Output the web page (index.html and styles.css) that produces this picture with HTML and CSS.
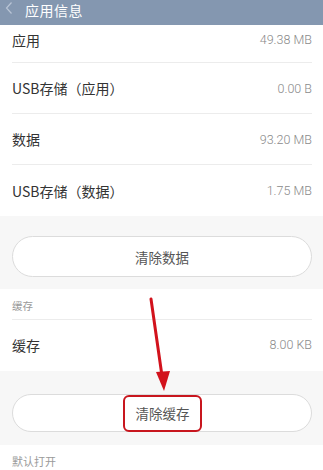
FILE: index.html
```html
<!DOCTYPE html>
<html lang="zh">
<head>
<meta charset="utf-8">
<link rel="stylesheet" href="styles.css">
</head>
<body>
<div class="page">
  <header class="topbar">
    <svg class="back" width="8" height="12" viewBox="0 0 8 12"><path d="M6.5 0.5 L1.5 6 L6.5 11.5" fill="none" stroke="#b9c5d6" stroke-width="1.2"/></svg>
    <span class="title">应用信息</span>
  </header>
  <section class="group">
    <div class="row first"><span class="label">应用</span><span class="value">49.38 MB</span></div>
    <div class="row"><span class="label">USB存储（应用）</span><span class="value">0.00 B</span></div>
    <div class="row"><span class="label">数据</span><span class="value">93.20 MB</span></div>
    <div class="row last"><span class="label">USB存储（数据）</span><span class="value">1.75 MB</span></div>
  </section>
  <section class="btnarea a">
    <div class="pill tall">清除数据</div>
  </section>
  <section class="group">
    <div class="subhead">缓存</div>
    <div class="row last cache"><span class="label">缓存</span><span class="value">8.00 KB</span></div>
  </section>
  <section class="btnarea b">
    <div class="pill"><span class="mark">清除缓存</span></div>
  </section>
  <section class="group">
    <div class="subhead tail">默认打开</div>
  </section>
  <svg class="arrow" width="323" height="470" viewBox="0 0 323 470">
    <line x1="151" y1="299" x2="162" y2="376" stroke="#d2121c" stroke-width="3" stroke-linecap="round"/>
    <polygon points="156,372 170,371 164,391" fill="#d2121c"/>
  </svg>
</div>
</body>
</html>
```
FILE: styles.css
```css
* { box-sizing: border-box; }
html, body { margin: 0; padding: 0; background: #fff; }
body {
  width: 323px;
  height: 470px;
  overflow: hidden;
  font-family: "Noto Sans CJK SC", "Noto Sans", sans-serif;
  color: #333;
}
.page { position: relative; width: 323px; height: 470px; }
.topbar {
  height: 25px;
  background: #8497b0;
  display: flex;
  align-items: flex-start;
  padding-left: 5px;
  gap: 12px;
}
.back { margin-top: 2px; }
.title {
  color: #fff;
  font-size: 14px;
  line-height: 21px;
  margin-top: 0;
  letter-spacing: 0.5px;
}
.group { background: #fff; padding: 0 11px 0 12px; }
.row {
  display: flex;
  justify-content: space-between;
  align-items: center;
  height: 51px;
  border-bottom: 1px solid #ececec;
}
.row.first { height: 38px; padding-bottom: 8px; }
.row.last { border-bottom: none; }
.row.cache { height: 51px; padding-bottom: 2px; }
.label { font-size: 14px; color: #333; }
.value {
  font-family: Roboto, "Liberation Sans", sans-serif;
  font-weight: 300;
  font-size: 12.5px;
  color: #8a8a8a;
}
.btnarea { background: #f7f7f7; padding: 0 11px 0 12px; }
.btnarea.a { height: 73px; padding-top: 20px; }
.btnarea.b { height: 74px; padding-top: 23px; }
.pill {
  height: 38px;
  border: 1px solid #dcdcdc;
  border-radius: 21px;
  background: #fff;
  display: flex;
  align-items: center;
  justify-content: center;
  font-size: 13.5px;
  color: #555;
}
.pill.tall { height: 41px; }
.mark {
  border: 2.5px solid #c8161e;
  border-radius: 6px;
  height: 37px;
  width: 79px;
  display: flex;
  align-items: center;
  justify-content: center;
  margin-left: 1px;
}
.subhead {
  font-size: 10.5px;
  color: #9a9a9a;
  height: 31px;
  display: flex;
  align-items: center;
  padding-top: 2px;
  border-bottom: 1px solid #ececec;
}
.subhead.tail { border-bottom: none; height: 28px; padding-top: 4px; font-size: 11px; }
.arrow { position: absolute; left: 0; top: 0; pointer-events: none; }
```
